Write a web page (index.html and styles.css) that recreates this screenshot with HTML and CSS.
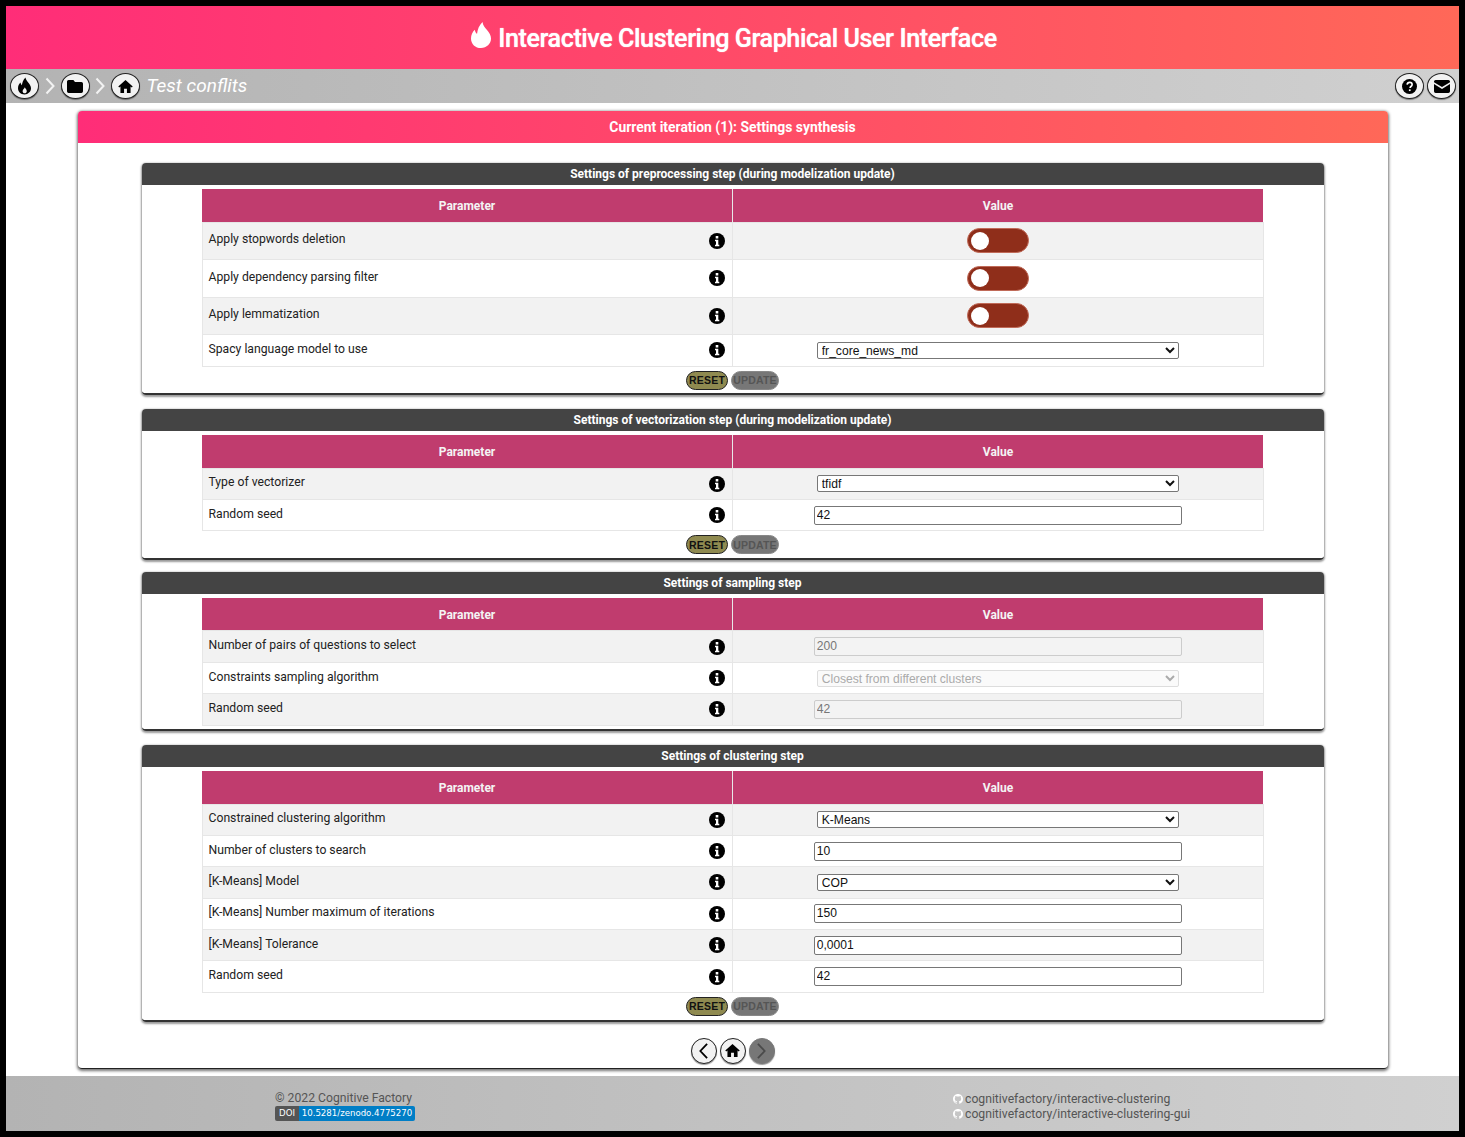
FILE: index.html
```html
<!DOCTYPE html>
<html lang="en">
<head>
<meta charset="utf-8">
<title>Interactive Clustering Graphical User Interface</title>
<link rel="stylesheet" href="styles.css">
</head>
<body>
<svg class="defs" width="0" height="0" aria-hidden="true">
  <symbol id="flame" viewBox="0 0 20 26"><path d="M11.500 0C12 3.500 14 5.500 16 8c2.200 2.700 4 5.300 4 8.600C20 22 15.600 26 10 26S0 22 0 16.400c0-3.300 1.400-6.400 3.800-8.700.3 1.800 1 3.200 2.200 4.200C6.500 7.500 8 3.500 11.500 0z"/></symbol>
  <symbol id="flame-hollow" viewBox="0 0 20 26"><path fill-rule="evenodd" d="M11.500 0C12 3.500 14 5.500 16 8c2.200 2.700 4 5.300 4 8.600C20 22 15.600 26 10 26S0 22 0 16.400c0-3.300 1.400-6.400 3.800-8.700.3 1.800 1 3.200 2.200 4.200C6.500 7.500 8 3.500 11.500 0zM10.500 15c-.4 2-3.400 3-3.400 6 0 2 1.400 3.200 3.200 3.200s3.200-1.200 3.200-3.200c0-2.800-2.300-3.600-3-6z"/></symbol>
  <symbol id="folder" viewBox="0 0 20 16"><path d="M2 0h6l2 2.500h8c1.100 0 2 .9 2 2V14c0 1.100-.9 2-2 2H2c-1.100 0-2-.9-2-2V2C0 .9.900 0 2 0z"/></symbol>
  <symbol id="home" viewBox="0 0 20 18"><path d="M10 0l10 9-1.300 1.400L17 9v9h-5v-6H8v6H3V9l-1.700 1.400L0 9z"/></symbol>
  <symbol id="help" viewBox="0 0 20 20"><circle cx="10" cy="10" r="10"/><path d="M6.800 7.500C7 5.500 8.300 4.500 10.200 4.500c2 0 3.300 1.200 3.300 2.800 0 1.400-.8 2-1.700 2.700-.8.600-1 1-1 2" fill="none" stroke="#fff" stroke-width="2.200"/><rect x="9.200" y="13.800" width="2.300" height="2.300" fill="#fff"/></symbol>
  <symbol id="mail" viewBox="0 0 20 16"><path d="M2 0h16c1.100 0 2 .9 2 2v.6l-10 6-10-6V2C0 .9.900 0 2 0zM0 5l10 6 10-6v9c0 1.100-.9 2-2 2H2c-1.100 0-2-.9-2-2z"/></symbol>
  <symbol id="info" viewBox="0 0 16 16"><circle cx="8" cy="8" r="8"/><rect x="6.700" y="3" width="2.600" height="2.500" fill="#fff"/><path d="M6 6.800h3.300v5h1v1.400H6v-1.400h1v-3.600H6z" fill="#fff"/></symbol>
  <symbol id="github" viewBox="0 0 16 16"><path d="M8 0C3.580 0 0 3.580 0 8c0 3.540 2.290 6.530 5.470 7.590.4.070.55-.17.55-.38 0-.19-.01-.82-.01-1.490-2.010.37-2.530-.49-2.690-.94-.09-.23-.48-.94-.82-1.130-.28-.15-.68-.52-.01-.53.63-.01 1.080.58 1.230.82.72 1.210 1.870.87 2.330.66.070-.52.28-.87.51-1.070-1.780-.2-3.640-.89-3.640-3.950 0-.87.31-1.590.82-2.150-.08-.2-.36-1.020.08-2.120 0 0 .67-.21 2.200.82.64-.18 1.320-.27 2-.27.68 0 1.360.09 2 .27 1.530-1.040 2.200-.82 2.200-.82.44 1.100.16 1.920.08 2.120.51.56.82 1.270.82 2.150 0 3.070-1.870 3.750-3.650 3.950.29.25.54.73.54 1.480 0 1.070-.01 1.930-.01 2.200 0 .21.15.46.55.38A8.013 8.013 0 0016 8c0-4.420-3.580-8-8-8z"/></symbol>
</svg>

<header class="app-header">
  <svg class="title-flame"><use href="#flame"/></svg>
  <h1 class="app-title">Interactive Clustering Graphical User Interface</h1>
</header>

<nav class="navbar">
  <a class="nav-circle"><svg class="ic-flame"><use href="#flame-hollow"/></svg></a>
  <svg class="crumb" viewBox="0 0 10 18"><path d="M1.500 1.500L8.500 9l-7 7.500"/></svg>
  <a class="nav-circle"><svg class="ic-folder"><use href="#folder"/></svg></a>
  <svg class="crumb" viewBox="0 0 10 18"><path d="M1.500 1.500L8.500 9l-7 7.500"/></svg>
  <a class="nav-circle"><svg class="ic-home"><use href="#home"/></svg></a>
  <span class="project-name">Test conflits</span>
  <span class="nav-right">
    <a class="nav-circle"><svg class="ic-help"><use href="#help"/></svg></a>
    <a class="nav-circle"><svg class="ic-mail"><use href="#mail"/></svg></a>
  </span>
</nav>

<main class="card">
  <h2 class="card-title">Current iteration (1): Settings synthesis</h2>

  <section class="panel first">
    <h3 class="panel-title">Settings of preprocessing step (during modelization update)</h3>
    <table class="settings">
      <thead><tr><th>Parameter</th><th>Value</th></tr></thead>
      <tbody>
        <tr class="tall"><td><div class="param"><span>Apply stopwords deletion</span><svg class="info"><use href="#info"/></svg></div></td><td><span class="toggle"><i></i></span></td></tr>
        <tr class="tall"><td><div class="param"><span>Apply dependency parsing filter</span><svg class="info"><use href="#info"/></svg></div></td><td><span class="toggle"><i></i></span></td></tr>
        <tr class="tall"><td><div class="param"><span>Apply lemmatization</span><svg class="info"><use href="#info"/></svg></div></td><td><span class="toggle"><i></i></span></td></tr>
        <tr><td><div class="param"><span>Spacy language model to use</span><svg class="info"><use href="#info"/></svg></div></td><td><select class="field-select"><option>fr_core_news_md</option></select></td></tr>
      </tbody>
    </table>
    <div class="actions"><button class="btn-reset">RESET</button><button class="btn-update">UPDATE</button></div>
  </section>

  <section class="panel gap-b">
    <h3 class="panel-title">Settings of vectorization step (during modelization update)</h3>
    <table class="settings">
      <thead><tr><th>Parameter</th><th>Value</th></tr></thead>
      <tbody>
        <tr><td><div class="param"><span>Type of vectorizer</span><svg class="info"><use href="#info"/></svg></div></td><td><select class="field-select"><option>tfidf</option></select></td></tr>
        <tr><td><div class="param"><span>Random seed</span><svg class="info"><use href="#info"/></svg></div></td><td><input class="field-input" value="42"></td></tr>
      </tbody>
    </table>
    <div class="actions"><button class="btn-reset">RESET</button><button class="btn-update">UPDATE</button></div>
  </section>

  <section class="panel gap-c">
    <h3 class="panel-title">Settings of sampling step</h3>
    <table class="settings">
      <thead><tr><th>Parameter</th><th>Value</th></tr></thead>
      <tbody>
        <tr><td><div class="param"><span>Number of pairs of questions to select</span><svg class="info"><use href="#info"/></svg></div></td><td><input class="field-input" value="200" disabled></td></tr>
        <tr><td><div class="param"><span>Constraints sampling algorithm</span><svg class="info"><use href="#info"/></svg></div></td><td><select class="field-select" disabled><option>Closest from different clusters</option></select></td></tr>
        <tr><td><div class="param"><span>Random seed</span><svg class="info"><use href="#info"/></svg></div></td><td><input class="field-input" value="42" disabled></td></tr>
      </tbody>
    </table>
  </section>

  <section class="panel gap-d">
    <h3 class="panel-title">Settings of clustering step</h3>
    <table class="settings">
      <thead><tr><th>Parameter</th><th>Value</th></tr></thead>
      <tbody>
        <tr><td><div class="param"><span>Constrained clustering algorithm</span><svg class="info"><use href="#info"/></svg></div></td><td><select class="field-select"><option>K-Means</option></select></td></tr>
        <tr><td><div class="param"><span>Number of clusters to search</span><svg class="info"><use href="#info"/></svg></div></td><td><input class="field-input" value="10"></td></tr>
        <tr><td><div class="param"><span>[K-Means] Model</span><svg class="info"><use href="#info"/></svg></div></td><td><select class="field-select"><option>COP</option></select></td></tr>
        <tr><td><div class="param"><span>[K-Means] Number maximum of iterations</span><svg class="info"><use href="#info"/></svg></div></td><td><input class="field-input" value="150"></td></tr>
        <tr><td><div class="param"><span>[K-Means] Tolerance</span><svg class="info"><use href="#info"/></svg></div></td><td><input class="field-input" value="0,0001"></td></tr>
        <tr><td><div class="param"><span>Random seed</span><svg class="info"><use href="#info"/></svg></div></td><td><input class="field-input" value="42"></td></tr>
      </tbody>
    </table>
    <div class="actions"><button class="btn-reset">RESET</button><button class="btn-update">UPDATE</button></div>
  </section>

  <div class="pager">
    <a class="nav-circle round"><svg class="ic-chev" viewBox="0 0 12 20"><path d="M10 2L2.500 10l7.500 8"/></svg></a>
    <a class="nav-circle round"><svg class="ic-home"><use href="#home"/></svg></a>
    <a class="nav-circle round off"><svg class="ic-chev" viewBox="0 0 12 20"><path d="M2 2l7.500 8L2 18"/></svg></a>
  </div>
</main>

<footer class="app-footer">
  <div class="foot-left">
    <div>© 2022 Cognitive Factory</div>
    <div class="doi"><span class="doi-k">DOI</span><span class="doi-v">10.5281/zenodo.4775270</span></div>
  </div>
  <div class="foot-right">
    <a class="repo"><svg class="gh"><use href="#github"/></svg>cognitivefactory/interactive-clustering</a>
    <a class="repo"><svg class="gh"><use href="#github"/></svg>cognitivefactory/interactive-clustering-gui</a>
  </div>
</footer>
</body>
</html>
```
FILE: styles.css
```css
* { box-sizing: border-box; }
html, body { margin: 0; padding: 0; }
body {
  border: 6px solid #000;
  background: #fff;
  font-family: Roboto, "Liberation Sans", sans-serif;
  font-size: 12.200px;
  color: #222;
  min-height: 1137px;
}
.defs { position: absolute; }

.app-header {
  height: 63px;
  display: flex;
  align-items: center;
  justify-content: center;
  gap: 7px;
  padding-left: 3px;
  background: linear-gradient(90deg, #ff2d78, #ff6858);
  color: #fff;
}
.title-flame { width: 20px; height: 26px; fill: #fff; margin-top: -6px; }
.app-title { margin: 2px 0 0; font-size: 25px; font-weight: 500; letter-spacing: -0.360px; text-shadow: 0 0 1px #fff; }

.navbar {
  height: 34px;
  display: flex;
  align-items: center;
  padding: 0 3px 0 4px;
  background: linear-gradient(90deg, #b3b3b3, #d0d0d0);
}
.nav-circle {
  flex: none;
  width: 29px;
  height: 26px;
  border-radius: 50%;
  border: 1.500px solid #222;
  background: #f2f2f2;
  display: flex;
  align-items: center;
  justify-content: center;
  box-shadow: 0 1px 1px rgba(0,0,0,.4);
}
.nav-circle svg { fill: #000; }
.ic-flame { width: 13px; height: 18px; }
.ic-folder { width: 16px; height: 13px; }
.ic-home { width: 15px; height: 13px; }
.ic-help { width: 15px; height: 15px; }
.ic-mail { width: 16px; height: 13px; }
.crumb { width: 10px; height: 18px; margin: 0 5.750px; fill: none; stroke: #f2f2f2; stroke-width: 2; flex: none; }
.project-name { margin: 0 0 2px 6.500px; font-size: 19px; font-style: italic; color: #fff; }
.nav-right { margin-left: auto; display: flex; gap: 3px; }

.card {
  width: 1310px;
  margin: 8px auto 0;
  padding-bottom: 4px;
  border-radius: 4px;
  border-bottom: 1px solid #222;
  box-shadow: 0 1px 3px 1px rgba(0,0,0,.55);
}
.card-title {
  margin: 0;
  height: 32px;
  line-height: 32px;
  text-align: center;
  font-size: 13.900px;
  font-weight: 700;
  color: #fff;
  border-radius: 4px 4px 0 0;
  background: linear-gradient(90deg, #ff2d78, #ff6858);
}

.panel {
  width: 1182px;
  margin: 14px auto 0;
  border-radius: 4px;
  border-bottom: 2px solid #333;
  box-shadow: 0 1px 2px 1px rgba(0,0,0,.4);
  padding-bottom: 3px;
}
.panel.first { margin-top: 20px; padding-bottom: 2px; }
.panel.gap-b { margin-top: 14.400px; }
.panel.gap-c { margin-top: 11.600px; }
.panel.gap-d { margin-top: 14.400px; }
.panel-title {
  margin: 0 0 4px;
  height: 22px;
  line-height: 22px;
  text-align: center;
  font-size: 12px;
  font-weight: 700;
  color: #fff;
  background: #444;
  border-radius: 4px 4px 0 0;
}

.settings {
  width: 1062px;
  margin: 0 auto;
  border-collapse: collapse;
  table-layout: fixed;
}
.settings th {
  height: 33px;
  padding: 1px 0 0;
  background: #c03c6e;
  color: #f4f4f4;
  font-size: 12px;
  font-weight: 700;
  border-right: 1px solid #e8e8e8;
}
.settings th:last-child { border-right: 0; }
.settings td {
  height: 31.400px;
  padding: 0 7px 0 6px;
  text-align: center;
  border: 1px solid #e6e6e6;
}
.settings td:last-child { padding: 0; }
.settings tr.tall td { height: 37.600px; }
.settings tbody tr:nth-child(odd) { background: #f2f2f2; }
.param {
  display: flex;
  align-items: center;
  justify-content: space-between;
  text-align: left;
}
.param span { margin-bottom: 3px; }
.info { width: 16px; height: 16px; fill: #000; flex: none; }

.toggle {
  display: block;
  width: 62px;
  height: 25px;
  margin: 0 auto;
  padding: 3px 0 0 3px;
  border-radius: 13px;
  background: #8f2e1a;
  border: 1px solid #c06a58;
}
.toggle i { display: block; width: 18px; height: 18px; margin-top: -0.500px; border-radius: 50%; background: #fff; }

.field-select {
  display: block;
  width: 362px;
  height: 17px;
  margin: 0 auto;
  padding: 0;
  border: 1px solid #777;
  border-radius: 2px;
  background: #fff;
  font-family: "Liberation Sans", sans-serif;
  font-size: 12.100px;
  color: #111;
}
.field-select:disabled { border-color: #ddd; color: #aaa; background: #fafafa; opacity: 1; }
.field-input {
  display: block;
  width: 368px;
  height: 19px;
  margin: 0 auto;
  padding: 0 2px 1px;
  border: 1px solid #777;
  border-radius: 2px;
  font-family: "Liberation Sans", sans-serif;
  font-size: 12.100px;
  color: #111;
}
.field-input:disabled { background: #f3f3f3; border-color: #ccc; color: #777; }

.actions {
  display: flex;
  justify-content: center;
  gap: 3px;
  padding: 4px 0 1px;
}
.actions button {
  height: 19px;
  padding: 0;
  border-radius: 10px;
  font-family: "Liberation Sans", sans-serif;
  font-size: 10.500px;
  font-weight: 700;
  letter-spacing: .2px;
}
.btn-reset { width: 42px; background: #8f8a50; border: 1.500px solid #222; color: #111; }
.btn-update { width: 48px; background: #777; border: 1.500px solid #888; color: #555; }

.pager {
  display: flex;
  justify-content: center;
  gap: 3px;
  margin-top: 16px;
}
.nav-circle.round { width: 26px; }
.nav-circle.off { background: #777; border-color: #777; }
.ic-chev { width: 11px; height: 18px; }
.nav-circle .ic-chev { fill: none; stroke: #000; stroke-width: 2; }
.nav-circle.off .ic-chev { stroke: #4a4a4a; }

.app-footer {
  margin-top: 7px;
  height: 55px;
  display: grid;
  grid-template-columns: 947px 1fr;
  align-items: center;
  padding-top: 5px;
  background: linear-gradient(90deg, #b3b3b3, #d0d0d0);
  color: #555;
  font-size: 12.200px;
}
.foot-left { padding-left: 269px; line-height: 15px; }
.doi { display: flex; width: 140px; height: 15px; font-family: "DejaVu Sans", sans-serif; font-size: 8.600px; color: #fff; border-radius: 2px; overflow: hidden; }
.doi-k { flex: none; width: 24px; background: #555; text-align: center; }
.doi-v { flex: 1 0 auto; width: 116px; background: #007ec6; text-align: center; }
.foot-right { display: flex; flex-direction: column; line-height: 15px; margin-top: 2px; }
.repo { display: flex; align-items: center; gap: 2px; }
.gh { width: 10px; height: 10px; fill: #fff; }
```
